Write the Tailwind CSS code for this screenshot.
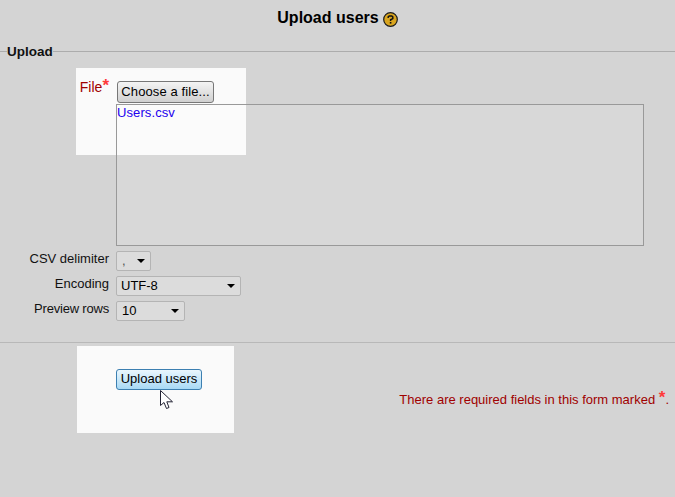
<!DOCTYPE html>
<html lang="en">

<head>
    <meta charset="UTF-8">
    <title>Upload users</title>
    <script src="https://cdn.jsdelivr.net/npm/@tailwindcss/browser@4"></script>
</head>

<body class="bg-[#d4d4d4] font-['Liberation_Sans',Arial,sans-serif] text-[13px] text-[#111] overflow-hidden">
    <div class="relative h-[497px] w-[675px]">
        <!-- highlight panels sit behind the form -->
        <div class="absolute left-[76px] top-[68px] h-[87px] w-[170px] bg-[#fafafa]"></div>
        <div class="absolute left-[77px] top-[346px] h-[87px] w-[157px] bg-[#fafafa]"></div>

        <div class="relative">
            <!-- title -->
            <div class="flex h-[41px] items-start justify-center pt-[9px]">
                <h2 class="text-[16px] leading-[18px] font-bold text-black">Upload users</h2>
                <svg class="ml-[4px] mt-[3px]" width="15" height="15" viewBox="0 0 15 15">
                    <circle cx="7.5" cy="7.5" r="6.8" fill="#d9a51f" stroke="#1a1a1a" stroke-width="1.2" />
                    <path d="M5.2 6V4.8L6.2 4H8.8L9.8 4.8V6.6L7.6 7.8V9" fill="none" stroke="#111" stroke-width="1.5" />
                    <rect x="6.8" y="10" width="1.6" height="1.6" fill="#111" />
                </svg>
            </div>

            <!-- legend -->
            <div class="flex h-[20px] items-center">
                <div class="h-px w-[7px] bg-[#acacac]"></div>
                <span class="relative top-[1px] text-[13.5px] font-bold leading-[20px]">Upload</span>
                <div class="h-px flex-1 bg-[#acacac]"></div>
            </div>

            <!-- file row -->
            <div class="mt-[10px] flex">
                <div class="w-[110px] pr-[1px] pt-[8px] text-right text-[14px] leading-[16px] text-[#a00000]">
                    <span>File</span><span class="relative top-[-1px] text-[17px] font-bold leading-[0] text-[#ff3a3a]">*</span>
                </div>
                <div class="ml-[6px] pt-[10px]">
                    <button class="ml-[1px] block h-[22px] w-[97px] rounded-[3px] border border-[#777] bg-gradient-to-b from-[#f4f4f4] to-[#d0d0d0] text-[13px] tracking-[0.1px] leading-[18px] text-black">Choose a file...</button>
                    <div class="mt-[1px] h-[142px] w-[528px] border border-[#999] bg-white/10 text-[13px] leading-[16px] tracking-[0.1px] text-[#2200ee]">Users.csv</div>
                </div>
            </div>

            <!-- select rows -->
            <div class="mt-[5px] flex flex-col gap-[5px]">
                <div class="flex h-[20px]">
                    <div class="w-[110px] pr-[1px] pt-[1px] text-right leading-[14px]">CSV delimiter</div>
                    <div class="ml-[6px] flex h-[20px] w-[35px] items-center justify-between rounded-[2px] border border-[#b4b4b4] bg-[#dcdcdc] pl-[5px] pr-[5px] text-[#555]">
                        <span class="leading-[14px]">,</span>
                        <span class="h-0 w-0 border-x-[4px] border-t-[4px] border-x-transparent border-t-black"></span>
                    </div>
                </div>
                <div class="flex h-[20px]">
                    <div class="w-[110px] pr-[1px] pt-[1px] text-right leading-[14px]">Encoding</div>
                    <div class="ml-[6px] flex h-[20px] w-[125px] items-center justify-between rounded-[2px] border border-[#b4b4b4] bg-[#dcdcdc] pl-[4px] pr-[5px] text-black">
                        <span class="leading-[14px]">UTF-8</span>
                        <span class="h-0 w-0 border-x-[4px] border-t-[4px] border-x-transparent border-t-black"></span>
                    </div>
                </div>
                <div class="flex h-[20px]">
                    <div class="w-[110px] pr-[1px] pt-[1px] text-right leading-[14px] tracking-[-0.2px]">Preview rows</div>
                    <div class="ml-[6px] flex h-[20px] w-[69px] items-center justify-between rounded-[2px] border border-[#b4b4b4] bg-[#dcdcdc] pl-[5px] pr-[5px] text-black">
                        <span class="leading-[14px]">10</span>
                        <span class="h-0 w-0 border-x-[4px] border-t-[4px] border-x-transparent border-t-black"></span>
                    </div>
                </div>
            </div>

            <!-- divider -->
            <div class="mt-[21px] h-px bg-[#b8b8b8]"></div>

            <!-- submit -->
            <div class="relative pt-[26px]">
                <button class="ml-[116px] block h-[21px] w-[86px] rounded-[3px] border border-[#3c7fb1] bg-gradient-to-b from-[#eaf6fd] to-[#a7d9f5] pb-[2px] text-[13px] leading-[15px] text-black">Upload users</button>
                <svg class="absolute left-[160px] top-[47px]" width="14" height="20" viewBox="0 0 14 20">
                    <path d="M0.5 0.5V15.5L4 12.5L6.5 18.5L9 17.5L6.8 11.8H12.5Z" fill="#fff" stroke="#222233" stroke-width="1" stroke-linejoin="round" />
                </svg>
                <div class="absolute right-[6px] top-[49px] text-[13px] leading-[16px] text-[#a00000]">There are required fields in this form marked <span class="relative top-[-1px] text-[17px] font-bold leading-[0] text-[#ff3a3a]">*</span>.</div>
            </div>
        </div>
    </div>
</body>

</html>
